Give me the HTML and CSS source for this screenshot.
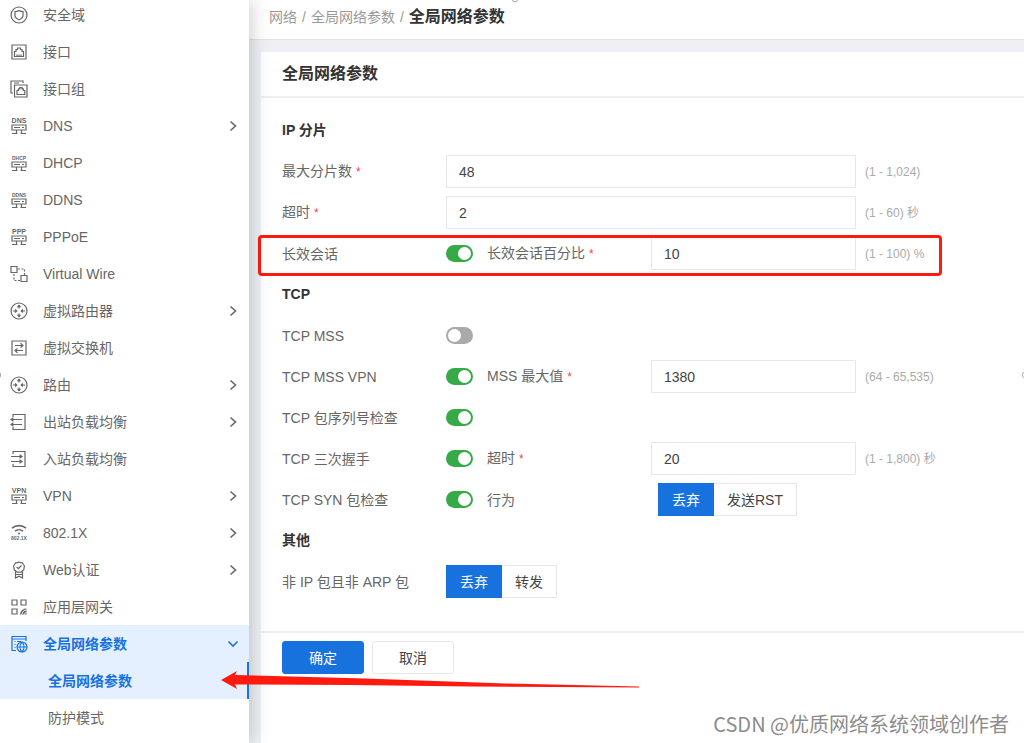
FILE: index.html
```html
<!DOCTYPE html>
<html lang="zh-CN">
<head>
<meta charset="utf-8">
<meta name="viewport" content="width=device-width, initial-scale=1">
<title>全局网络参数</title>
<link rel="stylesheet" href="styles.css">
</head>
<body>
<svg class="sprite" aria-hidden="true">
  <symbol id="i-zone" viewBox="0 0 18 18"><circle cx="9" cy="9" r="8"/><path d="M9 4.400c1.300.8 2.600 1.100 4 1.100v4c0 2-1.500 3.200-4 4.300-2.500-1.100-4-2.300-4-4.300v-4c1.400 0 2.700-.3 4-1.100z"/></symbol>
  <symbol id="i-port" viewBox="0 0 18 18"><path d="M2 2h14v14H2zM4.500 13.500V8.500H6V6.500h1.500V5h3v1.500H12v2h1.500v5zM7 13.500v-2M9 13.500v-2M11 13.500v-2"/></symbol>
  <symbol id="i-ports" viewBox="0 0 18 18"><path d="M3 13H1V1h12v2M4 3h5M4.500 5h12.500v12H4.500zM7 14.500v-4h1.500V8.800h1.300V7.700h2.200v1.100h1.300v1.700h1.500v4z"/></symbol>
  <symbol id="i-server" viewBox="0 0 18 18"><path d="M2 8h14v5H2zM4 10.500h6M12 10.500h2M6.500 13v3.500M11.500 13v3.500M2 16.500h5.500M10.500 16.500H16"/></symbol>
  <symbol id="i-wire" viewBox="0 0 18 18"><path d="M1 1.500h6v6H1zM11 10.500h6v6h-6z"/><path stroke-dasharray="2 1.500" d="M8 4h6.500v6M4 9v6.500h6.500"/></symbol>
  <symbol id="i-router" viewBox="0 0 18 18"><circle cx="9" cy="9" r="8"/><path d="M9 3v3.500M9 11.500v3.500M3 9h3.500M11.500 9h3.500"/><path class="solid" d="M9 2.500l2.200 2.700H6.800zM9 15.500l2.200-2.700H6.800zM7.700 9L5 6.800v4.400zM10.300 9L13 6.800v4.400z"/></symbol>
  <symbol id="i-switch" viewBox="0 0 18 18"><path d="M2 2h14v14H2zM5 6.500h7.500M13 11.500H5.500M10.500 4.300l2.500 2.200-2.500 2M7.500 9.500L5 11.500l2.500 2.200"/></symbol>
  <symbol id="i-out" viewBox="0 0 18 18"><path d="M3 4V1.500h12v15H3V14M1.500 6.500H12M1.500 11.500H12M3.500 4.800L1 6.500l2.500 1.700M3.500 9.800L1 11.500l2.500 1.700"/></symbol>
  <symbol id="i-in" viewBox="0 0 18 18"><path d="M3 4V1.500h12v15H3V14M1 6.500h10.500M1 11.500h10.500M9.500 4.800L12 6.500 9.500 8.200M9.500 9.800l2.500 1.700-2.500 1.700"/></symbol>
  <symbol id="i-wifi" viewBox="0 0 18 18"><path stroke-width="1.600" d="M2 4.200c4-3.400 10-3.400 14 0M5 7.200c2.300-2 5.700-2 8 0"/><circle class="solid" cx="9" cy="9.500" r="1"/></symbol>
  <symbol id="i-badge" viewBox="0 0 18 18"><path d="M9 1l1.700.7 1.800.2.900 1.600 1.100 1.500-.5 1.800-.1 1.800-1.500 1.200-1.300 1.300H7L5.600 9.800 4.100 8.600 4 6.800 3.500 5l1.100-1.500.9-1.600 1.800-.2zM5.500 10.500V17L9 15.200l3.500 1.800v-6.500M6.600 5.900l1.700 1.800 3.200-3.200M6 13.500h6"/></symbol>
  <symbol id="i-apps" viewBox="0 0 18 18"><path d="M2 2h5v5H2zM11 2h5v5h-5zM2 11h5v5H2z"/><path class="solid" d="M16.500 10.500v6H10c0-3.300 3-6 6.500-6z"/><path class="gap" d="M12 16.500c0-2.500 2-4.500 4.500-4.500M14.500 16.500c0-1 .9-2 2-2"/></symbol>
  <symbol id="i-global" viewBox="0 0 18 18"><path d="M6 15.500H2V1.500h14V6M2 4h14M4.500 6.500h1M7 6.500h4M4.500 9.500h1M4.500 12.500h1"/><circle cx="12" cy="12" r="5"/><path d="M7 12h10M12 7c-2.700 3-2.700 7 0 10M12 7c2.700 3 2.700 7 0 10"/></symbol>
  <symbol id="i-right" viewBox="0 0 12 12"><path d="M3.500 1.500L8.500 6l-5 4.500"/></symbol>
  <symbol id="i-down" viewBox="0 0 12 12"><path d="M1.500 3.500L6 8l4.500-4.500"/></symbol>
</svg>

<div class="app">
  <nav class="sidebar" aria-label="网络">
    <ul class="menu">
      <li><a class="item" href="#"><svg class="icon"><use href="#i-zone"/></svg><span class="name">安全域</span></a></li>
      <li><a class="item" href="#"><svg class="icon"><use href="#i-port"/></svg><span class="name">接口</span></a></li>
      <li><a class="item" href="#"><svg class="icon"><use href="#i-ports"/></svg><span class="name">接口组</span></a></li>
      <li><a class="item" href="#"><svg class="icon" viewBox="0 0 18 18"><use href="#i-server"/><text class="tag" x="9" y="6">DNS</text></svg><span class="name">DNS</span><svg class="chevron"><use href="#i-right"/></svg></a></li>
      <li><a class="item" href="#"><svg class="icon" viewBox="0 0 18 18"><use href="#i-server"/><text class="tag tag-small" x="9" y="6">DHCP</text></svg><span class="name">DHCP</span></a></li>
      <li><a class="item" href="#"><svg class="icon" viewBox="0 0 18 18"><use href="#i-server"/><text class="tag tag-small" x="9" y="6">DDNS</text></svg><span class="name">DDNS</span></a></li>
      <li><a class="item" href="#"><svg class="icon" viewBox="0 0 18 18"><use href="#i-server"/><text class="tag" x="9" y="6">PPP</text></svg><span class="name">PPPoE</span></a></li>
      <li><a class="item" href="#"><svg class="icon"><use href="#i-wire"/></svg><span class="name">Virtual Wire</span></a></li>
      <li><a class="item" href="#"><svg class="icon"><use href="#i-router"/></svg><span class="name">虚拟路由器</span><svg class="chevron"><use href="#i-right"/></svg></a></li>
      <li><a class="item" href="#"><svg class="icon"><use href="#i-switch"/></svg><span class="name">虚拟交换机</span></a></li>
      <li><a class="item" href="#"><svg class="icon"><use href="#i-router"/></svg><span class="name">路由</span><svg class="chevron"><use href="#i-right"/></svg></a></li>
      <li><a class="item" href="#"><svg class="icon"><use href="#i-out"/></svg><span class="name">出站负载均衡</span><svg class="chevron"><use href="#i-right"/></svg></a></li>
      <li><a class="item" href="#"><svg class="icon"><use href="#i-in"/></svg><span class="name">入站负载均衡</span></a></li>
      <li><a class="item" href="#"><svg class="icon" viewBox="0 0 18 18"><use href="#i-server"/><text class="tag" x="9" y="6">VPN</text></svg><span class="name">VPN</span><svg class="chevron"><use href="#i-right"/></svg></a></li>
      <li><a class="item" href="#"><svg class="icon" viewBox="0 0 18 18"><use href="#i-wifi"/><text class="tag tag-small" x="9" y="16">802.1X</text></svg><span class="name">802.1X</span><svg class="chevron"><use href="#i-right"/></svg></a></li>
      <li><a class="item" href="#"><svg class="icon"><use href="#i-badge"/></svg><span class="name">Web认证</span><svg class="chevron"><use href="#i-right"/></svg></a></li>
      <li><a class="item" href="#"><svg class="icon"><use href="#i-apps"/></svg><span class="name">应用层网关</span></a></li>
      <li>
        <a class="item active" href="#"><svg class="icon"><use href="#i-global"/></svg><span class="name">全局网络参数</span><svg class="chevron"><use href="#i-down"/></svg></a>
        <ul class="submenu">
          <li><a class="item sub active current" href="#" aria-current="page">全局网络参数</a></li>
          <li><a class="item sub" href="#">防护模式</a></li>
        </ul>
      </li>
    </ul>
  </nav>

  <main class="main">
    <header class="crumbs">
      <a href="#">网络</a><span>/</span><a href="#">全局网络参数</a><span>/</span><strong>全局网络参数</strong>
    </header>

    <form class="card">
      <h1 class="card-title">全局网络参数</h1>
      <div class="fields">
        <h2 class="section">IP 分片</h2>
        <div class="row">
          <label for="frag">最大分片数 <em>*</em></label>
          <input class="box wide" id="frag" type="text" value="48">
          <span class="hint">(1 - 1,024)</span>
        </div>
        <div class="row">
          <label for="timeout">超时 <em>*</em></label>
          <input class="box wide" id="timeout" type="text" value="2">
          <span class="hint">(1 - 60) 秒</span>
        </div>
        <div class="row marked">
          <label for="long">长效会话</label>
          <input class="toggle" id="long" type="checkbox" checked>
          <label for="percent">长效会话百分比 <em>*</em></label>
          <input class="box" id="percent" type="text" value="10">
          <span class="hint">(1 - 100) %</span>
        </div>

        <h2 class="section">TCP</h2>
        <div class="row">
          <label for="mss">TCP MSS</label>
          <input class="toggle" id="mss" type="checkbox">
        </div>
        <div class="row">
          <label for="mssvpn">TCP MSS VPN</label>
          <input class="toggle" id="mssvpn" type="checkbox" checked>
          <label for="mssmax">MSS 最大值 <em>*</em></label>
          <input class="box" id="mssmax" type="text" value="1380">
          <span class="hint">(64 - 65,535)</span>
        </div>
        <div class="row">
          <label for="seq">TCP 包序列号检查</label>
          <input class="toggle" id="seq" type="checkbox" checked>
        </div>
        <div class="row">
          <label for="shake">TCP 三次握手</label>
          <input class="toggle" id="shake" type="checkbox" checked>
          <label for="shaketime">超时 <em>*</em></label>
          <input class="box" id="shaketime" type="text" value="20">
          <span class="hint">(1 - 1,800) 秒</span>
        </div>
        <div class="row">
          <label for="syn">TCP SYN 包检查</label>
          <input class="toggle" id="syn" type="checkbox" checked>
          <span id="action">行为</span>
          <div class="segments indent" role="group" aria-labelledby="action">
            <button class="segment on" type="button" aria-pressed="true">丢弃</button>
            <button class="segment" type="button" aria-pressed="false">发送RST</button>
          </div>
        </div>

        <h2 class="section">其他</h2>
        <div class="row">
          <span id="nonip">非 IP 包且非 ARP 包</span>
          <div class="segments wide" role="group" aria-labelledby="nonip">
            <button class="segment on" type="button" aria-pressed="true">丢弃</button>
            <button class="segment" type="button" aria-pressed="false">转发</button>
          </div>
        </div>
      </div>
      <footer class="actions">
        <button class="button primary" type="submit">确定</button>
        <button class="button" type="button">取消</button>
      </footer>
    </form>
  </main>

  <svg class="arrow" viewBox="0 0 420 20" aria-hidden="true"><path d="M0 9L16 0l-2 4 130 3.500 140 5 134 3v1L250 15.500 130 14 14 13.500l2 4.500z"/></svg>
  <span class="handle handle-top"></span>
  <span class="handle handle-left"></span>
  <span class="handle handle-right"></span>
  <p class="watermark">CSDN @优质网络系统领域创作者</p>
</div>
</body>
</html>
```

FILE: styles.css
```css
* {
  box-sizing: border-box;
}

body {
  margin: 0;
  color: #666;
  background: #eff0f5;
  font: 14px/20px "Liberation Sans", "Noto Sans CJK SC", sans-serif;
}

button,
input {
  margin: 0;
  color: #444;
  font: inherit;
}

a {
  color: inherit;
  text-decoration: none;
}

ul {
  margin: 0;
  padding: 0;
  list-style: none;
}

.sprite {
  position: absolute;
  width: 0;
  height: 0;
}

.app {
  position: relative;
  display: flex;
  height: 100vh;
  overflow: hidden;
}

/* Sidebar */
.sidebar {
  position: relative;
  z-index: 1;
  flex: none;
  width: 249px;
  background: #fff;
  box-shadow: 0 0 20px rgba(0, 0, 0, 0.24);
}

.menu {
  margin-top: -4px;
}

.item {
  display: flex;
  align-items: center;
  height: 37px;
  padding: 0 10px;
}

.icon {
  flex: none;
  width: 18px;
  height: 18px;
  margin-right: 15px;
  stroke-width: 1.2;
}

.icon,
.chevron {
  fill: none;
  stroke: currentColor;
}

.solid {
  fill: currentColor;
  stroke: none;
}

.gap {
  stroke: #fff;
  stroke-width: 1;
}

.tag {
  fill: currentColor;
  stroke: none;
  font-size: 7px;
  font-weight: bold;
  text-anchor: middle;
}

.tag-small {
  font-size: 5px;
}

.name {
  flex: 1;
}

.chevron {
  width: 12px;
  height: 12px;
  stroke-width: 1.6;
}

.active {
  color: #1872de;
  background: #e4f0ff;
  font-weight: bold;
}

.sub {
  padding-left: 48px;
}

.current {
  border-right: 2px solid #1872de;
}

/* Content */
.main {
  display: flex;
  flex: 1;
  flex-direction: column;
  min-width: 0;
}

.crumbs {
  display: flex;
  align-items: center;
  gap: 5px;
  height: 40px;
  padding: 0 20px 6px;
  color: #999;
  background: #fff;
  border-bottom: 1px solid #e2e3e6;
}

.crumbs strong {
  color: #333;
  font-size: 16px;
}

.card {
  flex: 1;
  margin: 12px 0 0 12px;
  background: #fff;
}

.card-title {
  margin: 0;
  padding: 12px 21px;
  color: #333;
  border-bottom: 2px solid #efefef;
  font-size: 16px;
  line-height: 20px;
}

.fields {
  display: grid;
  gap: 8px;
  padding: 16px 21px 33px;
}

.section {
  margin: 0;
  color: #333;
  font-size: 14px;
  line-height: 33px;
}

.row {
  position: relative;
  display: grid;
  grid-template-columns: 164px 41px 164px 205px 1fr;
  align-items: center;
  height: 33px;
}

.row em {
  color: #f04848;
  font-size: 12px;
  font-style: normal;
}

.marked::after {
  position: absolute;
  inset: -2px 61px -6px -24px;
  border: 3px solid #ff1a0f;
  border-radius: 4px;
  content: "";
  pointer-events: none;
}

.box {
  width: 100%;
  height: 33px;
  padding: 0 12px;
  background: #fff;
  border: 1px solid #e8e8e8;
}

.wide {
  grid-column: span 3;
}

.hint {
  padding-left: 9px;
  color: #aaa;
  font-size: 12px;
}

.toggle {
  display: flex;
  align-items: center;
  width: 27px;
  height: 17px;
  padding: 2px;
  background: #aaa;
  border-radius: 9px;
  appearance: none;
}

.toggle::before {
  width: 13px;
  height: 13px;
  background: #fff;
  border-radius: 50%;
  content: "";
}

.toggle:checked {
  justify-content: flex-end;
  background: #35aa47;
}

.segments {
  display: flex;
}

.indent {
  margin-left: 7px;
}

.segment {
  height: 33px;
  padding: 0 13px;
  background: #fff;
  border: 1px solid #e8e8e8;
  border-left: 0;
}

.segment.on,
.primary {
  color: #fff;
  background: #1872de;
  border: 1px solid #1872de;
}

.actions {
  display: flex;
  gap: 8px;
  padding: 8px 21px;
  border-top: 2px solid #efefef;
}

.button {
  width: 82px;
  height: 33px;
  background: #fff;
  border: 1px solid #e8e8e8;
  border-radius: 3px;
}

.button.primary {
  color: #fff;
  background: #1872de;
  border-color: #1872de;
}

/* Annotations over the page */
.arrow {
  position: absolute;
  z-index: 2;
  top: 671px;
  left: 221px;
  width: 420px;
  height: 20px;
  fill: #ff1a0f;
}

.handle {
  position: absolute;
  z-index: 2;
  width: 6px;
  height: 6px;
  border: 1px solid #aaa;
  border-radius: 2px;
}

.handle-top {
  top: -4px;
  left: 50%;
}

.handle-left {
  top: 50%;
  left: -5px;
}

.handle-right {
  top: 50%;
  right: -4px;
}

.watermark {
  position: absolute;
  right: 15px;
  bottom: 4px;
  margin: 0;
  color: #8c8c8c;
  font: 20px/30px "Noto Sans CJK SC", sans-serif;
}
```
